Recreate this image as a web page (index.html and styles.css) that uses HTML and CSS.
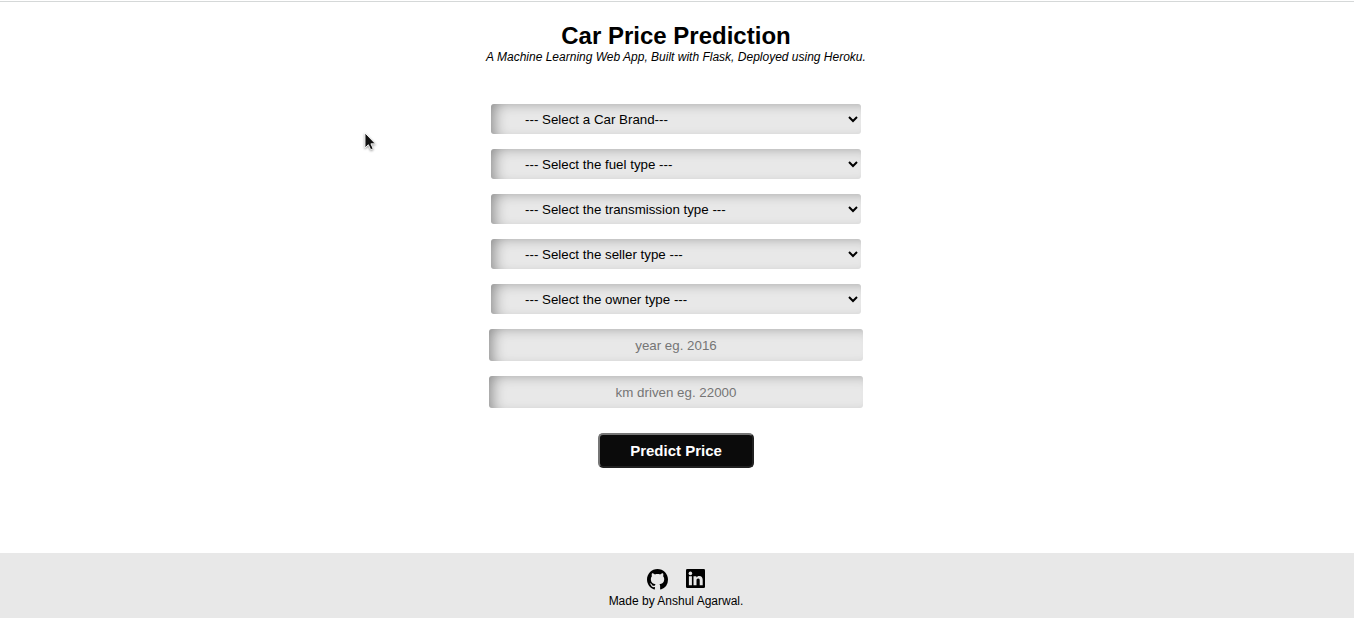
FILE: index.html
```
<!DOCTYPE html>
<html lang="en">
<head>
<meta charset="utf-8">
<title>Car Price Prediction</title>
<link rel="stylesheet" href="styles.css">
</head>
<body>
<main class="main">
  <h1 class="title">Car Price Prediction</h1>
  <p class="subtitle">A Machine Learning Web App, Built with Flask, Deployed using Heroku.</p>
  <form class="form">
    <select class="field select"><option>--- Select a Car Brand---</option></select>
    <select class="field select"><option>--- Select the fuel type ---</option></select>
    <select class="field select"><option>--- Select the transmission type ---</option></select>
    <select class="field select"><option>--- Select the seller type ---</option></select>
    <select class="field select"><option>--- Select the owner type ---</option></select>
    <input class="field input" type="text" placeholder="year eg. 2016">
    <input class="field input" type="text" placeholder="km driven eg. 22000">
    <button class="submit" type="button">Predict Price</button>
  </form>
</main>
<footer class="footer">
  <div class="social">
    <svg class="github" viewBox="0 0 16 16"><path d="M8 0C3.58 0 0 3.58 0 8c0 3.54 2.29 6.53 5.47 7.59.4.07.55-.17.55-.38 0-.19-.01-.82-.01-1.49-2.01.37-2.53-.49-2.69-.94-.09-.23-.48-.94-.82-1.13-.28-.15-.68-.52-.01-.53.63-.01 1.08.58 1.23.82.72 1.21 1.87.87 2.33.66.07-.52.28-.87.51-1.07-1.78-.2-3.64-.89-3.64-3.95 0-.87.31-1.59.82-2.15-.08-.2-.36-1.02.08-2.12 0 0 .67-.21 2.2.82.64-.18 1.32-.27 2-.27s1.36.09 2 .27c1.53-1.04 2.2-.82 2.2-.82.44 1.1.16 1.92.08 2.12.51.56.82 1.27.82 2.15 0 3.07-1.87 3.75-3.65 3.95.29.25.54.73.54 1.48 0 1.07-.01 1.93-.01 2.2 0 .21.15.46.55.38A8.01 8.01 0 0 0 16 8c0-4.42-3.58-8-8-8z"/></svg>
    <svg class="linkedin" viewBox="0 0 19 19"><rect width="19" height="19" rx="1.300"/><g fill="#e8e8e8"><circle cx="4.400" cy="4.400" r="1.800"/><path d="M2.900 7.200h3v9h-3zM7.500 7.200h2.900v1.300c.6-1 1.600-1.600 2.800-1.600 2.700 0 3.500 1.700 3.500 4.200v5.100h-3v-4.500c0-1.300-.3-2.200-1.500-2.200-1.300 0-1.700.9-1.700 2.200v4.500h-3z"/></g></svg>
  </div>
  <p class="credit">Made by Anshul Agarwal.</p>
</footer>
<svg class="cursor" viewBox="0 0 14 22"><path d="M1.500 1v16.500l3.700-3.500 2.600 5.500 2.700-1.200-2.500-5.300h5z"/></svg>
</body>
</html>
```
FILE: styles.css
```
* { box-sizing: border-box; margin: 0; }
body {
  display: flex;
  flex-direction: column;
  height: 618px;
  overflow: hidden;
  background: #fff;
  color: #000;
  font-family: "Liberation Sans", Arial, sans-serif;
}
.main {
  display: flex;
  flex-direction: column;
  align-items: center;
  height: 553px;
  padding: 22px 2px 0 0;
  background: linear-gradient(#fff 1px, #d5d8d8 1px, #d5d8d8 2px, #fff 2px);
}
.title { font-size: 24px; line-height: 28px; }
.subtitle { font-size: 12px; line-height: 14px; font-style: italic; }
.form { display: flex; flex-direction: column; align-items: center; gap: 15px; margin-top: 40px; }
.field {
  border: 0;
  border-radius: 3px;
  background-color: #e8e8e8;
  box-shadow: inset 8px 3px 14px -5px rgba(0, 0, 0, .4);
  font-family: inherit;
  font-size: 13.333px;
  color: #000;
}
.select { width: 370px; height: 30px; padding: 0 0 0 30px; }
.input { width: 374px; height: 32px; text-align: center; padding: 1px 0 0; }
.input::placeholder { color: #757575; }
.submit {
  width: 156px;
  height: 35px;
  margin-top: 10px;
  padding: 0;
  border: 2px solid;
  border-color: #767676 #212121 #212121 #767676;
  border-radius: 5px;
  background: #0b0b0b;
  color: #fff;
  font: bold 15px "Liberation Sans", Arial, sans-serif;
}
.footer {
  display: flex;
  flex-direction: column;
  align-items: center;
  height: 65px;
  padding: 16px 2px 0 0;
  background: #e8e8e8;
}
.social { display: flex; align-items: flex-start; gap: 18px; height: 22px; }
.github { width: 21px; height: 21px; }
.linkedin { width: 19px; height: 19px; }
.credit { font-size: 12px; line-height: 14px; margin-top: 3px; }
.cursor {
  position: absolute;
  left: 363px;
  top: 132px;
  width: 14px;
  height: 20px;
  fill: #111;
  stroke: #fff;
  stroke-width: 1;
  filter: drop-shadow(0 1px 1px rgba(0, 0, 0, .4));
}
```
